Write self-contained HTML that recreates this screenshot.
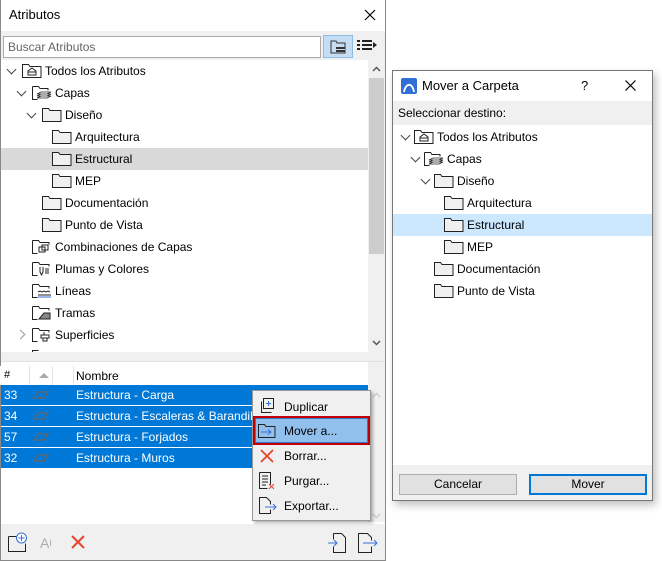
<!DOCTYPE html>
<html><head><meta charset="utf-8"><style>
*{margin:0;padding:0;box-sizing:border-box}
body{width:662px;height:561px;background:#fff;font-family:"Liberation Sans",sans-serif;font-size:12px;color:#000;position:relative;overflow:hidden}
.a{position:absolute}
.t{position:absolute;white-space:nowrap;line-height:22px}
.chev{position:absolute;width:7px;height:7px;border-right:1.5px solid #444;border-bottom:1.5px solid #444;transform:rotate(45deg)}
.chr{position:absolute;width:7px;height:7px;border-right:1.5px solid #999;border-bottom:1.5px solid #999;transform:rotate(-45deg)}
</style></head><body>

<!-- LEFT WINDOW -->
<div class="a" style="left:0;top:0;width:386px;height:561px;border:1px solid #888;border-top:none;background:#fff"></div>
<div class="t" style="left:9px;top:4px;font-size:13px">Atributos</div>
<svg class="a" style="left:364px;top:9px" width="12" height="12"><path d="M1 1L11 11M11 1L1 11" stroke="#000" stroke-width="1.2"/></svg>
<div class="a" style="left:1px;top:31px;width:384px;height:29px;background:#f0f0f0"></div>
<div class="a" style="left:3px;top:36px;width:318px;height:22px;border:1px solid #aaa;background:#fff"></div>
<div class="t" style="left:8px;top:36px;color:#666">Buscar Atributos</div>
<div class="a" style="left:323px;top:35px;width:30px;height:23px;background:#c4ddf3;border:1px solid #8fbce6"></div>
<svg class="a" style="left:330px;top:39px" width="18" height="16"><path d="M1 2h5l1 2h8v10H1z" fill="none" stroke="#333"/><rect x="6" y="8" width="9" height="5" fill="#333"/><path d="M6 10.5h9" stroke="#c4ddf3"/></svg>
<svg class="a" style="left:357px;top:40px" width="20" height="12"><path d="M0 1h3M5 1h10M0 5h3M5 5h10M0 9h3M5 9h10" stroke="#222" stroke-width="2"/><path d="M16 2l4 3-4 3z" fill="#222"/></svg>

<!-- tree -->
<div class="a" style="left:1px;top:148px;width:367px;height:22px;background:#d9d9d9"></div>
<div class="a" style="left:368px;top:60px;width:17px;height:292px;background:#f0f0f0"></div>
<div class="a" style="left:369px;top:78px;width:15px;height:176px;background:#cdcdcd"></div>
<svg class="a" style="left:372px;top:66px" width="9" height="6"><path d="M1 5l3.5-3.5L8 5" stroke="#555" stroke-width="1.5" fill="none"/></svg>
<svg class="a" style="left:372px;top:340px" width="9" height="6"><path d="M1 1l3.5 3.5L8 1" stroke="#555" stroke-width="1.5" fill="none"/></svg>

<div class="chev" style="left:8px;top:66px"></div>
<svg class="a" style="left:22px;top:63px" width="20" height="16"><path d="M0.5 1.5h6l1.5 2h11v11H0.5z" fill="#fff" stroke="#222"/><path d="M6 12V8l4-3 4 3v4zM6 9h8" fill="none" stroke="#222"/></svg>
<div class="t" style="left:45px;top:60px">Todos los Atributos</div>

<div class="chev" style="left:18px;top:88px"></div>
<svg class="a" style="left:32px;top:85px" width="20" height="16"><path d="M0.5 1.5h6l1.5 2h8v2M0.5 1.5v13h5" fill="none" stroke="#222"/><path d="M5 9l4-2h10l-4 2zM5 11l4-2h10l-4 2zM5 13l4-2h10l-4 2z" fill="#fff" stroke="#222" stroke-width="0.8"/></svg>
<div class="t" style="left:55px;top:82px">Capas</div>

<div class="chev" style="left:28px;top:110px"></div>
<svg class="a" style="left:42px;top:107px" width="20" height="16"><path d="M0.5 1.5h6l1.5 2h11v11H0.5z" fill="#f0f0f0" stroke="#222"/></svg>
<div class="t" style="left:65px;top:104px">Diseño</div>

<svg class="a" style="left:52px;top:129px" width="20" height="16"><path d="M0.5 1.5h6l1.5 2h11v11H0.5z" fill="#f0f0f0" stroke="#222"/></svg>
<div class="t" style="left:75px;top:126px">Arquitectura</div>
<svg class="a" style="left:52px;top:151px" width="20" height="16"><path d="M0.5 1.5h6l1.5 2h11v11H0.5z" fill="#f0f0f0" stroke="#222"/></svg>
<div class="t" style="left:75px;top:148px">Estructural</div>
<svg class="a" style="left:52px;top:173px" width="20" height="16"><path d="M0.5 1.5h6l1.5 2h11v11H0.5z" fill="#f0f0f0" stroke="#222"/></svg>
<div class="t" style="left:75px;top:170px">MEP</div>
<svg class="a" style="left:42px;top:195px" width="20" height="16"><path d="M0.5 1.5h6l1.5 2h11v11H0.5z" fill="#f0f0f0" stroke="#222"/></svg>
<div class="t" style="left:65px;top:192px">Documentación</div>
<svg class="a" style="left:42px;top:217px" width="20" height="16"><path d="M0.5 1.5h6l1.5 2h11v11H0.5z" fill="#f0f0f0" stroke="#222"/></svg>
<div class="t" style="left:65px;top:214px">Punto de Vista</div>

<svg class="a" style="left:32px;top:239px" width="20" height="16"><path d="M0.5 1.5h6l1.5 2h9v2M0.5 1.5v13h5" fill="none" stroke="#222"/><rect x="7" y="8" width="6" height="5" fill="none" stroke="#222"/><rect x="10" y="6" width="6" height="5" fill="none" stroke="#222"/></svg>
<div class="t" style="left:55px;top:236px">Combinaciones de Capas</div>
<svg class="a" style="left:32px;top:261px" width="20" height="16"><path d="M0.5 1.5h6l1.5 2h9v2M0.5 1.5v13h5" fill="none" stroke="#222"/><path d="M8 6v5l1.5 3 1.5-3V6M13 8h4M13 10h4M13 12h4" fill="none" stroke="#222"/></svg>
<div class="t" style="left:55px;top:258px">Plumas y Colores</div>
<svg class="a" style="left:32px;top:283px" width="20" height="16"><path d="M0.5 1.5h6l1.5 2h9v2M0.5 1.5v13h5" fill="none" stroke="#222"/><path d="M6 9l2-1 2 1 2-1 2 1 2-1 2 1" fill="none" stroke="#222"/><path d="M6 12h13" stroke="#222"/><path d="M6 14h13" stroke="#3a6fd8"/></svg>
<div class="t" style="left:55px;top:280px">Líneas</div>
<svg class="a" style="left:32px;top:305px" width="20" height="16"><path d="M0.5 1.5h6l1.5 2h9v2M0.5 1.5v13h5" fill="none" stroke="#222"/><path d="M7 14l5-6h6v6z" fill="#888" stroke="#222"/></svg>
<div class="t" style="left:55px;top:302px">Tramas</div>
<div class="chr" style="left:17px;top:331px"></div>
<svg class="a" style="left:32px;top:327px" width="20" height="16"><path d="M0.5 1.5h6l1.5 2h9v2M0.5 1.5v13h5" fill="none" stroke="#222"/><path d="M9 8h8v3H9zM11 11v3h4v-3M12 5v3" fill="none" stroke="#222"/></svg>
<div class="t" style="left:55px;top:324px">Superficies</div>
<svg class="a" style="left:32px;top:349px" width="20" height="4"><path d="M0.5 3.5v-2h6" fill="none" stroke="#222"/></svg>

<div class="a" style="left:1px;top:352px;width:384px;height:9px;background:#f0f0f0"></div>
<div class="a" style="left:1px;top:361px;width:384px;height:1px;background:#e0e0e0"></div>

<!-- table -->
<div class="a" style="left:368px;top:362px;width:17px;height:160px;background:#f0f0f0"></div>
<svg class="a" style="left:372px;top:392px" width="9" height="6"><path d="M1 5l3.5-3.5L8 5" stroke="#ccc" stroke-width="1.5" fill="none"/></svg>
<svg class="a" style="left:372px;top:513px" width="9" height="6"><path d="M1 1l3.5 3.5L8 1" stroke="#ccc" stroke-width="1.5" fill="none"/></svg>
<div class="a" style="left:0;top:366px;width:368px;height:19px;background:#fff"></div>
<div class="a" style="left:29px;top:366px;width:1px;height:19px;background:#e5e5e5"></div>
<div class="a" style="left:52px;top:366px;width:1px;height:19px;background:#e5e5e5"></div>
<div class="a" style="left:73px;top:366px;width:1px;height:19px;background:#e5e5e5"></div>
<div class="t" style="left:4px;top:364px;font-size:11px">#</div>
<svg class="a" style="left:39px;top:372px" width="10" height="6"><path d="M0 6l5-5 5 5z" fill="#aaa"/></svg>
<div class="t" style="left:76px;top:365px">Nombre</div>

<div class="a" style="left:1px;top:385px;width:367px;height:20px;background:#0078d7"></div>
<div class="a" style="left:1px;top:406px;width:367px;height:20px;background:#0078d7"></div>
<div class="a" style="left:1px;top:427px;width:367px;height:20px;background:#0078d7"></div>
<div class="a" style="left:1px;top:448px;width:367px;height:20px;background:#0078d7"></div>
<div class="t" style="left:4px;top:384px;color:#fff">33</div>
<div class="t" style="left:4px;top:405px;color:#fff">34</div>
<div class="t" style="left:4px;top:426px;color:#fff">57</div>
<div class="t" style="left:4px;top:447px;color:#fff">32</div>
<svg class="a" style="left:33px;top:390px" width="16" height="10"><path d="M1 8l4-6h10l-4 6z" fill="none" stroke="#666" stroke-width="1.2"/></svg>
<svg class="a" style="left:33px;top:411px" width="16" height="10"><path d="M1 8l4-6h10l-4 6z" fill="none" stroke="#666" stroke-width="1.2"/></svg>
<svg class="a" style="left:33px;top:432px" width="16" height="10"><path d="M1 8l4-6h10l-4 6z" fill="none" stroke="#666" stroke-width="1.2"/></svg>
<svg class="a" style="left:33px;top:453px" width="16" height="10"><path d="M1 8l4-6h10l-4 6z" fill="none" stroke="#666" stroke-width="1.2"/></svg>
<div class="t" style="left:76px;top:384px;color:#fff">Estructura - Carga</div>
<div class="t" style="left:76px;top:405px;color:#fff">Estructura - Escaleras &amp; Barandillas</div>
<div class="t" style="left:76px;top:426px;color:#fff">Estructura - Forjados</div>
<div class="t" style="left:76px;top:447px;color:#fff">Estructura - Muros</div>

<!-- bottom toolbar -->
<div class="a" style="left:1px;top:524px;width:384px;height:36px;background:#f0f0f0"></div>
<svg class="a" style="left:8px;top:532px" width="20" height="20"><path d="M0.5 4.5h8M0.5 4.5v15h17v-8" fill="none" stroke="#222"/><circle cx="13.5" cy="6" r="5" fill="#fff" stroke="#3a6fd8"/><path d="M13.5 3v6M10.5 6h6" stroke="#3a6fd8"/></svg>
<div class="t" style="left:40px;top:532px;color:#aaa;font-size:14px">A<span style="font-size:9px;vertical-align:top">I</span></div>
<svg class="a" style="left:71px;top:535px" width="14" height="14"><path d="M1 1l12 12M13 1L1 13" stroke="#e8452c" stroke-width="2"/></svg>
<svg class="a" style="left:328px;top:533px" width="20" height="20"><path d="M5.5 0.5h8l4 4v15h-12v-6M5.5 0.5v6" fill="none" stroke="#222"/><path d="M0 10h9M6 7l3 3-3 3" fill="none" stroke="#3a6fd8"/></svg>
<svg class="a" style="left:358px;top:533px" width="20" height="20"><path d="M13.5 7.5v-3l-4-4h-9v19h13v-6" fill="none" stroke="#222"/><path d="M5 10h14M16 7l3 3-3 3" fill="none" stroke="#3a6fd8"/></svg>

<!-- context menu -->
<div class="a" style="left:252px;top:390px;width:119px;height:131px;background:#f0f0f0;border:1px solid #999;box-shadow:2px 2px 3px rgba(0,0,0,0.3)"></div>
<div class="a" style="left:253px;top:416px;width:117px;height:29px;border:2px solid #c00000"></div>
<div class="a" style="left:255px;top:418px;width:113px;height:25px;background:#92c0ec;border:1px solid #3a78c2"></div>
<svg class="a" style="left:259px;top:397px" width="16" height="18"><path d="M4.5 1.5h10v10h-10z" fill="none" stroke="#222"/><path d="M9.5 4v5M7 6.5h5" stroke="#3a6fd8"/><path d="M2.5 4.5v11h10" fill="none" stroke="#222"/></svg>
<div class="t" style="left:284px;top:396px">Duplicar</div>
<svg class="a" style="left:258px;top:423px" width="18" height="16"><path d="M0.5 1.5h6l1.5 2h9v11H0.5z" fill="none" stroke="#222"/><path d="M3 9h10M10 6.5l3 2.5-3 2.5" fill="none" stroke="#3a6fd8"/></svg>
<div class="t" style="left:284px;top:420px">Mover a...</div>
<svg class="a" style="left:260px;top:449px" width="14" height="14"><path d="M1 1l12 12M13 1L1 13" stroke="#e8452c" stroke-width="1.8"/></svg>
<div class="t" style="left:284px;top:445px">Borrar...</div>
<svg class="a" style="left:259px;top:472px" width="17" height="18"><path d="M0.5 0.5h11v12M0.5 0.5v16h8" fill="none" stroke="#222"/><path d="M3 4h6M3 7h6M3 10h6M3 13h4" stroke="#222"/><path d="M10 12l5 5M15 12l-5 5" stroke="#e8452c"/></svg>
<div class="t" style="left:284px;top:470px">Purgar...</div>
<svg class="a" style="left:259px;top:497px" width="18" height="18"><path d="M11.5 7.5v-3l-4-4h-7v16h11v-4" fill="none" stroke="#222"/><path d="M6 10h11M14 7l3 3-3 3" fill="none" stroke="#3a6fd8"/></svg>
<div class="t" style="left:284px;top:495px">Exportar...</div>

<!-- RIGHT DIALOG -->
<div class="a" style="left:392px;top:70px;width:261px;height:431px;border:1px solid #777;background:#fff;box-shadow:3px 4px 8px rgba(0,0,0,0.25)"></div>
<svg class="a" style="left:401px;top:78px" width="16" height="16"><rect width="16" height="16" rx="2" fill="#2f6fd6"/><path d="M3 14C4 6 11 3 13 14" fill="none" stroke="#fff" stroke-width="1.8"/></svg>
<div class="t" style="left:422px;top:75px;font-size:13px">Mover a Carpeta</div>
<div class="t" style="left:581px;top:75px;font-size:13px">?</div>
<svg class="a" style="left:625px;top:80px" width="11" height="11"><path d="M0.5 0.5l10 10M10.5 0.5l-10 10" stroke="#000" stroke-width="1.2"/></svg>
<div class="a" style="left:393px;top:101px;width:259px;height:24px;background:#f0f0f0"></div>
<div class="t" style="left:398px;top:102px">Seleccionar destino:</div>
<div class="a" style="left:393px;top:214px;width:259px;height:22px;background:#cce8ff"></div>

<div class="chev" style="left:402px;top:132px"></div>
<svg class="a" style="left:414px;top:129px" width="20" height="16"><path d="M0.5 1.5h6l1.5 2h11v11H0.5z" fill="#fff" stroke="#222"/><path d="M6 12V8l4-3 4 3v4zM6 9h8" fill="none" stroke="#222"/></svg>
<div class="t" style="left:437px;top:126px">Todos los Atributos</div>
<div class="chev" style="left:412px;top:154px"></div>
<svg class="a" style="left:424px;top:151px" width="20" height="16"><path d="M0.5 1.5h6l1.5 2h8v2M0.5 1.5v13h5" fill="none" stroke="#222"/><path d="M5 9l4-2h10l-4 2zM5 11l4-2h10l-4 2zM5 13l4-2h10l-4 2z" fill="#fff" stroke="#222" stroke-width="0.8"/></svg>
<div class="t" style="left:447px;top:148px">Capas</div>
<div class="chev" style="left:422px;top:176px"></div>
<svg class="a" style="left:434px;top:173px" width="20" height="16"><path d="M0.5 1.5h6l1.5 2h11v11H0.5z" fill="#f0f0f0" stroke="#222"/></svg>
<div class="t" style="left:457px;top:170px">Diseño</div>
<svg class="a" style="left:444px;top:195px" width="20" height="16"><path d="M0.5 1.5h6l1.5 2h11v11H0.5z" fill="#f0f0f0" stroke="#222"/></svg>
<div class="t" style="left:467px;top:192px">Arquitectura</div>
<svg class="a" style="left:444px;top:217px" width="20" height="16"><path d="M0.5 1.5h6l1.5 2h11v11H0.5z" fill="#f0f0f0" stroke="#222"/></svg>
<div class="t" style="left:467px;top:214px">Estructural</div>
<svg class="a" style="left:444px;top:239px" width="20" height="16"><path d="M0.5 1.5h6l1.5 2h11v11H0.5z" fill="#f0f0f0" stroke="#222"/></svg>
<div class="t" style="left:467px;top:236px">MEP</div>
<svg class="a" style="left:434px;top:261px" width="20" height="16"><path d="M0.5 1.5h6l1.5 2h11v11H0.5z" fill="#f0f0f0" stroke="#222"/></svg>
<div class="t" style="left:457px;top:258px">Documentación</div>
<svg class="a" style="left:434px;top:283px" width="20" height="16"><path d="M0.5 1.5h6l1.5 2h11v11H0.5z" fill="#f0f0f0" stroke="#222"/></svg>
<div class="t" style="left:457px;top:280px">Punto de Vista</div>

<div class="a" style="left:393px;top:465px;width:259px;height:35px;background:#f0f0f0"></div>
<div class="a" style="left:399px;top:474px;width:118px;height:21px;background:#e1e1e1;border:1px solid #adadad"></div>
<div class="t" style="left:399px;top:474px;width:118px;text-align:center;line-height:21px">Cancelar</div>
<div class="a" style="left:529px;top:474px;width:118px;height:21px;background:#e1e1e1;border:2px solid #0078d7"></div>
<div class="t" style="left:529px;top:474px;width:118px;text-align:center;line-height:21px">Mover</div>
</body></html>
